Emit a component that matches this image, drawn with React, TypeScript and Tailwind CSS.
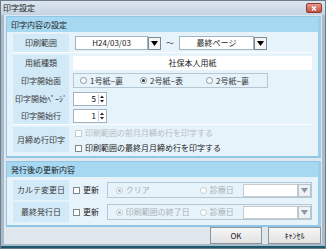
import React from 'react';

const FONT = "font-['Noto_Sans_CJK_JP','Noto_Sans',sans-serif]";

const DropBtn = ({ disabled = false }: { disabled?: boolean }) => (
  <div className={`w-[13px] h-[13px] flex items-center justify-center border ${disabled ? 'border-[#b8c4cc] bg-[#eef2f5]' : 'border-[#7d8a94] bg-[#f4f4f4]'}`}>
    <svg width="7" height="5" viewBox="0 0 7 5">
      <path d="M0 0h7L3.5 5z" fill={disabled ? '#8a98a4' : '#000'} />
    </svg>
  </div>
);

const Radio = ({ checked = false, disabled = false }: { checked?: boolean; disabled?: boolean }) => (
  <span className={`inline-flex w-[7px] h-[7px] rounded-full border items-center justify-center bg-white ${disabled ? 'border-[#c0c8ce]' : 'border-[#8a949c]'}`}>
    {checked && <span className={`w-[3px] h-[3px] rounded-full ${disabled ? 'bg-[#b0b8be]' : 'bg-[#333]'}`} />}
  </span>
);

const Check = ({ disabled = false }: { disabled?: boolean }) => (
  <span className={`inline-block w-[7px] h-[7px] border bg-white ${disabled ? 'border-[#c4ccd2]' : 'border-[#7e8890]'}`} />
);

const Spin = ({ value }: { value: string }) => (
  <div className="w-[34px] h-[14px] bg-white border border-[#a2b2bf] flex items-center justify-end">
    <span className="pr-[2px] leading-none">{value}</span>
    <div className="w-[7px] h-[10px] flex flex-col border-l border-[#c0c8d0] mr-[1px]">
      <svg width="6" height="5" viewBox="0 0 6 5"><path d="M1 4h4L3 1.5z" fill="#222" /></svg>
      <svg width="6" height="5" viewBox="0 0 6 5"><path d="M1 1h4L3 3.5z" fill="#222" /></svg>
    </div>
  </div>
);

const Label = ({ children, h }: { children: React.ReactNode; h: string }) => (
  <div className={`w-[56px] ${h} flex items-center justify-center bg-[#d2e9f8] text-[#3a3a3a] shrink-0`}>{children}</div>
);

const Header = ({ text }: { text: string }) => (
  <div className="h-[15px] bg-[#a6d8f2] flex items-center pl-[4px] text-[#222]">{text}</div>
);

export default function App() {
  return (
    <div className={`w-[326px] h-[249px] bg-[#a9bacb] border border-[#6c7c8c] flex flex-col overflow-hidden text-[8px] ${FONT}`}>
      {/* タイトルバー */}
      <div className="h-[14px] flex items-center justify-between pl-[2px] pr-[3px] bg-gradient-to-b from-[#dbe5ef] to-[#c5d4e3] text-[#222]">
        <span>印字設定</span>
        <div className="w-[16px] h-[10px] rounded-[2px] bg-gradient-to-b from-[#e49a8c] to-[#c4513f] border border-[#8e3a2f] flex items-center justify-center">
          <svg width="6" height="5" viewBox="0 0 6 5"><path d="M1 0.5l4 4M5 0.5l-4 4" stroke="#fff" strokeWidth="1.3" /></svg>
        </div>
      </div>

      <div className="flex-1 mx-[3px] mb-[2px] bg-[#e0e8ee] flex flex-col pl-[2px] pr-[1px] pt-[1px]">
        {/* 印字内容の設定 */}
        <div className="border border-[#8fc6e6] border-r-[3px] border-b-[2px] border-r-[#9ccde9] bg-[#e6f3fb] flex flex-col">
          <Header text="印字内容の設定" />
          <div className="flex flex-col px-[6px] pt-[2px] pb-[2px] gap-[2px]">
            <div className="flex items-center border-b border-white">
              <Label h="h-[18px]">印刷範囲</Label>
              <div className="flex items-center pl-[6px]">
                <div className="w-[73px] h-[14px] bg-white border border-[#a2b2bf] flex items-center justify-center text-[#222]">H24/03/03</div>
                <DropBtn />
                <span className="w-[18px] text-center text-[#444]">～</span>
                <div className="w-[75px] h-[14px] bg-white border border-[#a2b2bf] flex items-center justify-center text-[#222]">最終ページ</div>
                <DropBtn />
              </div>
            </div>

            <div className="flex border-b border-white">
              <div className="w-[56px] flex flex-col bg-[#d2e9f8] text-[#3a3a3a]">
                <div className="h-[16px] flex items-center justify-center">用紙種類</div>
                <div className="h-[19px] flex items-center justify-center">印字開始面</div>
                <div className="h-[17px] flex items-center justify-center">印字開始ﾍﾟｰｼﾞ</div>
                <div className="h-[17px] flex items-center justify-center">印字開始行</div>
              </div>
              <div className="flex-1 flex flex-col pl-[4px]">
                <div className="h-[16px] flex items-center">
                  <div className="w-full h-[14px] bg-white flex items-center justify-center text-[#222]">社保本人用紙</div>
                </div>
                <div className="h-[19px] flex items-center">
                  <div className="w-[195px] h-[15px] border border-[#b6c6d2] flex items-center text-[#333]">
                    <span className="flex items-center gap-[3px] pl-[6px] w-[66px]"><Radio />1号紙−裏</span>
                    <span className="flex items-center gap-[3px] w-[66px]"><Radio checked />2号紙−表</span>
                    <span className="flex items-center gap-[3px]"><Radio />2号紙−裏</span>
                  </div>
                </div>
                <div className="h-[17px] flex items-center"><Spin value="5" /></div>
                <div className="h-[17px] flex items-center"><Spin value="1" /></div>
              </div>
            </div>

            <div className="flex">
              <Label h="h-[25px]">月締め行印字</Label>
              <div className="flex flex-col justify-center pl-[6px] gap-[3px]">
                <span className="flex items-center gap-[3px] text-[#b4bcc2]"><Check disabled />印刷範囲の前月月締め行を印字する</span>
                <span className="flex items-center gap-[3px] text-[#222]"><Check />印刷範囲の最終月月締め行を印字する</span>
              </div>
            </div>
          </div>
        </div>

        {/* 発行後の更新内容 */}
        <div className="mt-[3px] border border-[#8fc6e6] border-r-[3px] border-b-[2px] border-r-[#9ccde9] bg-[#e6f3fb] flex flex-col">
          <Header text="発行後の更新内容" />
          <div className="flex flex-col px-[6px] py-[3px] gap-[2px]">
            {[
              { label: 'カルテ変更日', first: 'クリア' },
              { label: '最終発行日', first: '印刷範囲の終了日' },
            ].map((r) => (
              <div key={r.label} className="flex items-center">
                <Label h="h-[20px]">{r.label}</Label>
                <span className="flex items-center gap-[3px] pl-[4px] w-[38px] text-[#222]"><Check />更新</span>
                <div className="w-[207px] h-[16px] border border-[#b6c6d2] flex items-center text-[#a8b0b6]">
                  <span className="flex items-center gap-[3px] pl-[8px] w-[92px]"><Radio checked disabled />{r.first}</span>
                  <span className="flex items-center gap-[3px] w-[43px]"><Radio disabled />診療日</span>
                  <div className="w-[55px] h-[13px] bg-white border border-[#c4ccd2]" />
                  <DropBtn disabled />
                </div>
              </div>
            ))}
          </div>
        </div>

        <div className="flex-1 flex items-center justify-end gap-[6px]">
          <div className="w-[52px] h-[17px] border border-[#8d959c] bg-gradient-to-b from-[#f6f6f6] to-[#e2e2e2] flex items-center justify-center text-[#222]">OK</div>
          <div className="w-[53px] h-[17px] border border-[#8d959c] bg-gradient-to-b from-[#f6f6f6] to-[#e2e2e2] flex items-center justify-center text-[#222]">ｷｬﾝｾﾙ</div>
        </div>
      </div>
      <div className="h-[2px] bg-[#1d5a6c]" />
    </div>
  );
}
